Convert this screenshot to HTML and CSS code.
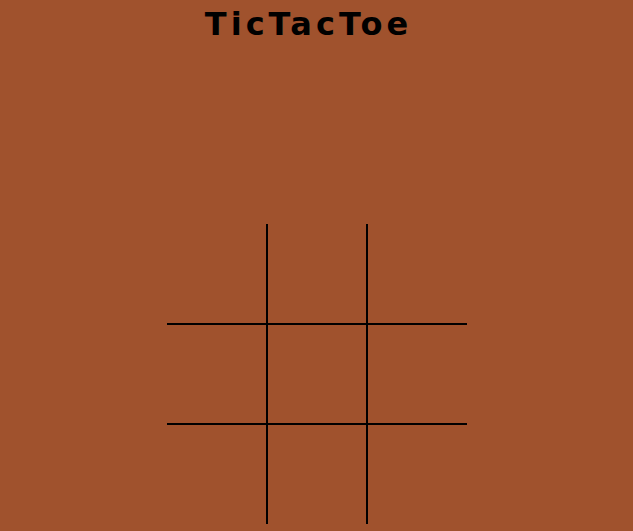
FILE: index.html
```html
<!DOCTYPE html>
<html>
<head>
<meta charset="utf-8">
<title>TicTacToe</title>
<link rel="stylesheet" href="styles.css">
</head>
<body>
<h1 class="title">TicTacToe</h1>
<div class="board">
  <div class="cell c1"></div>
  <div class="cell c2"></div>
  <div class="cell c3"></div>
  <div class="cell c4"></div>
  <div class="cell c5"></div>
  <div class="cell c6"></div>
  <div class="cell c7"></div>
  <div class="cell c8"></div>
  <div class="cell c9"></div>
</div>
</body>
</html>
```
FILE: styles.css
```css
html, body {
  margin: 0;
  padding: 0;
  background: #A0522D;
  height: 100%;
}
.title {
  margin: 0;
  padding: 4px 16px 0 0;
  font-family: "DejaVu Sans", sans-serif;
  font-weight: bold;
  font-size: 32px;
  line-height: 40px;
  letter-spacing: 4px;
  text-align: center;
  color: #000;
}
.board {
  width: 300px;
  margin: 180px auto 0;
  display: grid;
  grid-template-columns: repeat(3, 100px);
  grid-template-rows: repeat(3, 100px);
}
.cell {
  box-sizing: border-box;
  border: 0 solid #000;
}
.c1 { border-right-width: 1px; border-bottom-width: 1px; }
.c2 { border-left-width: 1px; border-right-width: 1px; border-bottom-width: 1px; }
.c3 { border-left-width: 1px; border-bottom-width: 1px; }
.c4 { border-right-width: 1px; border-top-width: 1px; border-bottom-width: 1px; }
.c5 { border-width: 1px; }
.c6 { border-left-width: 1px; border-top-width: 1px; border-bottom-width: 1px; }
.c7 { border-right-width: 1px; border-top-width: 1px; }
.c8 { border-left-width: 1px; border-right-width: 1px; border-top-width: 1px; }
.c9 { border-left-width: 1px; border-top-width: 1px; }
```
